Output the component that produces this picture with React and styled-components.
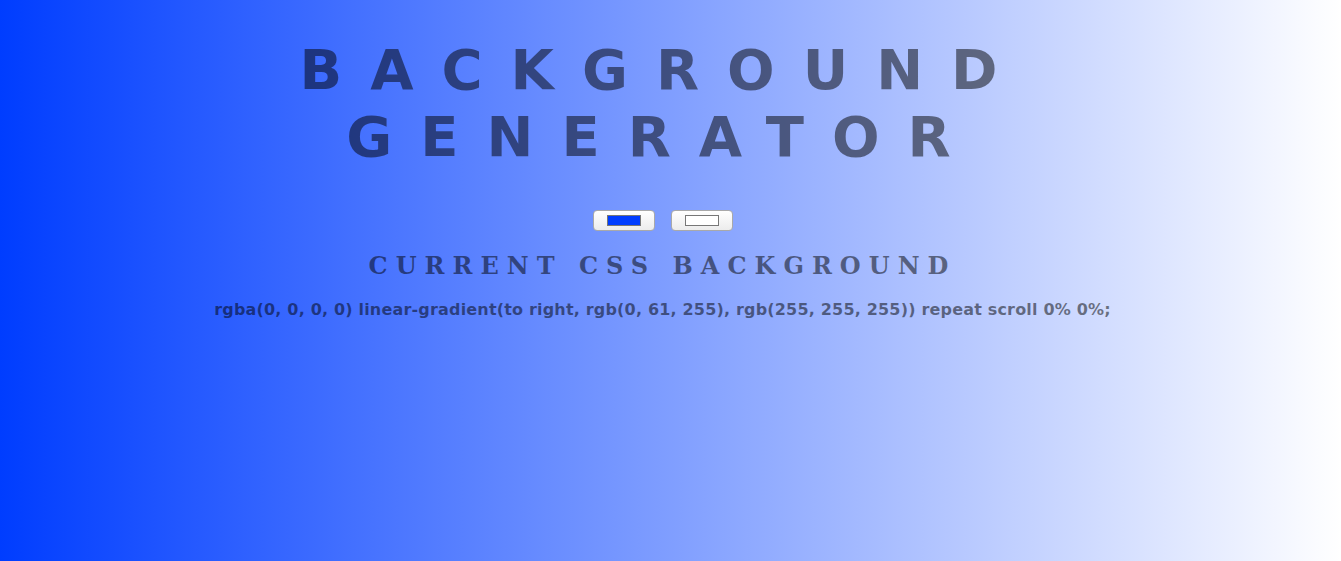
import { useState } from 'react'
import styled, { createGlobalStyle } from 'styled-components'

const GlobalStyle = createGlobalStyle`
  html {
    min-height: 100%;
  }
  body {
    margin: 8px 24px 8px 8px;
    min-height: calc(100vh - 16px);
    text-align: center;
    color: rgba(0, 0, 0, 0.5);
    background: ${(p) => p.$bg};
  }
`

const Title = styled.h1`
  font: 700 56px 'DejaVu Sans', Verdana, sans-serif;
  letter-spacing: 0.5em;
  text-transform: uppercase;
  color: rgba(0, 0, 0, 0.5);
  margin: 28px 0 40px;
  line-height: 67px;
`

const Pickers = styled.div`
  display: flex;
  justify-content: center;
  gap: 16px;
`

const ColorInput = styled.input`
  -webkit-appearance: none;
  appearance: none;
  width: 62px;
  height: 21px;
  padding: 0;
  border: 1px solid #a9a9a9;
  border-radius: 4px;
  background: linear-gradient(#ffffff, #ececec);
  cursor: pointer;

  &::-webkit-color-swatch-wrapper {
    padding: 4px 13px;
  }

  &::-webkit-color-swatch {
    border: 1px solid #777;
    border-radius: 0;
  }
`

const Heading = styled.h3`
  font: 700 24px 'DejaVu Serif', 'Liberation Serif', serif;
  letter-spacing: 8px;
  text-transform: uppercase;
  color: rgba(0, 0, 0, 0.5);
  margin: 20px 0 0;
`

const CssText = styled.h3`
  font: 700 16px 'DejaVu Sans', Verdana, sans-serif;
  letter-spacing: 0.18px;
  color: rgba(0, 0, 0, 0.5);
  margin: 20px 0 0;
`

export default function App() {
  const [color1, setColor1] = useState('#003dff')
  const [color2, setColor2] = useState('#ffffff')

  const hexToRgb = (hex) => {
    const n = parseInt(hex.slice(1), 16)
    return `rgb(${(n >> 16) & 255}, ${(n >> 8) & 255}, ${n & 255})`
  }

  const gradient = `linear-gradient(to right, ${hexToRgb(color1)}, ${hexToRgb(color2)})`

  return (
    <>
      <GlobalStyle $bg={gradient} />
      <Title>Background Generator</Title>
      <Pickers>
        <ColorInput type="color" value={color1} onChange={(e) => setColor1(e.target.value)} />
        <ColorInput type="color" value={color2} onChange={(e) => setColor2(e.target.value)} />
      </Pickers>
      <Heading>Current CSS Background</Heading>
      <CssText>rgba(0, 0, 0, 0) {gradient} repeat scroll 0% 0%;</CssText>
    </>
  )
}
